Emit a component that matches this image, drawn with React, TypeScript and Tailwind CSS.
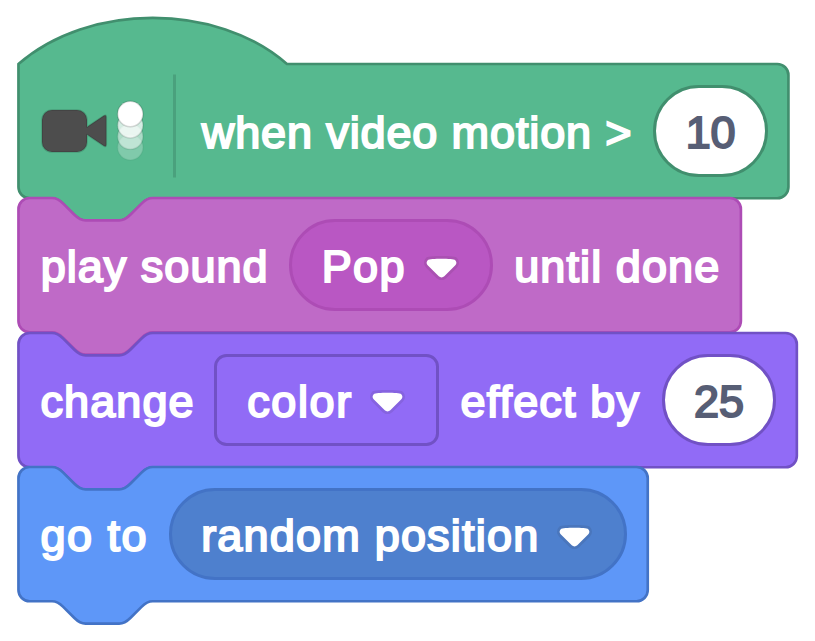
import type { ReactNode } from "react";

const UNIT = 2.797;

type Theme = { fill: string; stroke: string };

const NOTCH = "c2,0 3,1 4,2 l4,4 c1,1 2,2 4,2 h12 c2,0 3,-1 4,-2 l4,-4 c1,-1 2,-2 4,-2";
const TAB = "c-2,0 -3,1 -4,2 l-4,4 c-1,1 -2,2 -4,2 h-12 c-2,0 -3,-1 -4,-2 l-4,-4 c-1,-1 -2,-2 -4,-2";

function Shape({ width, theme, hat }: { width: number; theme: Theme; hat?: boolean }) {
  const top = hat ? "M0,0 c25,-22 71,-22 96,0" : `M0,4 a4,4 0 0,1 4,-4 H12 ${NOTCH}`;
  const d = `${top} H${width - 4} a4,4 0 0,1 4,4 v40 a4,4 0 0,1 -4,4 H48 ${TAB} H4 a4,4 0 0,1 -4,-4 z`;
  return (
    <svg
      className="absolute left-0 top-0 overflow-visible"
      width={width * UNIT}
      height={48 * UNIT}
      viewBox={`0 0 ${width} 48`}
    >
      <path d={d} transform="translate(0.16 0)" fill={theme.fill} stroke={theme.stroke} strokeWidth={0.95} />
    </svg>
  );
}

function Block({ width, theme, hat, children }: { width: number; theme: Theme; hat?: boolean; children: ReactNode }) {
  return (
    <div className="relative h-[134.25px]">
      <Shape width={width} theme={theme} hat={hat} />
      <div className="relative flex h-full items-center pl-[0.5px]">{children}</div>
    </div>
  );
}

function Label({ className, children }: { className: string; children: ReactNode }) {
  return <span className={`shrink-0 whitespace-pre ${className}`}>{children}</span>;
}

function NumberInput({ className, children }: { className: string; children: ReactNode }) {
  return (
    <div
      className={`flex h-[92px] w-[114.2px] shrink-0 items-center justify-center rounded-full border-[3px] bg-white text-[#575e75] ${className}`}
    >
      <span className="tracking-[-0.1px]">{children}</span>
    </div>
  );
}

function Caret({ className }: { className: string }) {
  return (
    <svg className={`shrink-0 ${className}`} width="35" height="24.2" viewBox="0 0 12.71 8.79">
      <path
        fill="#231f20"
        opacity="0.1"
        d="M12.71,2.44A2.41,2.41,0,0,1,12,4.16L8.08,8.08a2.45,2.45,0,0,1-3.45,0L0.72,4.16A2.42,2.42,0,0,1,0,2.44,2.48,2.48,0,0,1,.71.71C1,0.47,1.43,0,6.36,0S11.75,0.46,12,.71A2.44,2.44,0,0,1,12.71,2.44Z"
      />
      <path
        fill="#fff"
        d="M6.36,7.79a1.43,1.43,0,0,1-1-.42L1.42,3.45a1.44,1.44,0,0,1,0-2c0.56-.56,9.31-0.56,9.87,0a1.44,1.44,0,0,1,0,2L7.37,7.37A1.43,1.43,0,0,1,6.36,7.79Z"
      />
    </svg>
  );
}

function VideoIcon() {
  return (
    <svg className="ml-[21.5px] shrink-0" width="110" height="66" viewBox="40 98 110 66">
      <g fill="#4d4d4d" stroke="#000" strokeOpacity="0.15" strokeWidth="1.6" strokeLinejoin="round">
        <path d="M52,110 H77 a10,10 0 0,1 10,10 V127 L104,115.6 Q106.3,114.3 106.3,117 V144.6 Q106.3,147.4 104,146 L87,134.6 V142 a10,10 0 0,1 -10,10 H52 a10,10 0 0,1 -10,-10 V120 a10,10 0 0,1 10,-10 z" />
      </g>
      <g fill="#fff" stroke="#000" strokeOpacity="0.15" strokeWidth="1.6">
        <circle cx="130.3" cy="147.3" r="12.7" opacity="0.25" />
        <circle cx="130.3" cy="136.6" r="12.7" opacity="0.5" />
        <circle cx="130.3" cy="125.3" r="12.7" opacity="0.75" />
        <circle cx="130.3" cy="114" r="12.7" />
      </g>
    </svg>
  );
}

const video: Theme = { fill: "#56b98f", stroke: "#418f6e" };
const sound: Theme = { fill: "#bf6ac7", stroke: "#ad4cb5" };
const looks: Theme = { fill: "#916bf6", stroke: "#7151c5" };
const motion: Theme = { fill: "#5e97f8", stroke: "#4373c6" };

export default function App() {
  return (
    <div className="h-[641px] w-[815px] overflow-hidden bg-white pl-[18px] pt-[64px] font-['Liberation_Sans',Arial,sans-serif] text-[45px] font-normal leading-[52px] text-white [-webkit-text-stroke-width:2px]">
      <Block width={275.3} theme={video} hat>
        <VideoIcon />
        <div className="ml-[23.2px] h-[103px] w-[3px] shrink-0 -translate-y-[5.5px] bg-[#4aa17d]" />
        <Label className="ml-[25.6px] w-[451.7px] pt-[3px] tracking-[0.88px]">when video motion &gt;</Label>
        <NumberInput className="border-[#418f6e] pt-[3px]">10</NumberInput>
      </Block>
      <Block width={258.3} theme={sound}>
        <Label className="ml-[22.3px] w-[248.2px] pt-[3px] tracking-[1px]">play sound</Label>
        <div className="flex h-[92px] w-[204px] shrink-0 items-center rounded-full border-[3px] border-[#ad4cb5] bg-[#b957c3]">
          <Label className="ml-[29.8px] w-[102.4px] pt-[3px] tracking-[1.3px]">Pop</Label>
          <Caret className="mt-[5px]" />
        </div>
        <Label className="ml-[21.2px] pt-[3px] tracking-[1.1px]">until done</Label>
      </Block>
      <Block width={278.3} theme={looks}>
        <Label className="ml-[22px] w-[173.7px] pt-[5px] tracking-[1.1px]">change</Label>
        <div className="flex h-[92px] w-[225.3px] shrink-0 items-center rounded-[12.6px] border-[3px] border-[#7151c5]">
          <Label className="ml-[30px] w-[123px] pt-[5px] tracking-[1.6px]">color</Label>
          <Caret className="mt-[5.5px]" />
        </div>
        <Label className="ml-[21px] w-[201.4px] pt-[5px] tracking-[1.15px]">effect by</Label>
        <NumberInput className="border-[#7151c5] pt-[4px]">25</NumberInput>
      </Block>
      <Block width={225} theme={motion}>
        <Label className="ml-[22px] w-[128.7px] pt-[5px] tracking-[1.5px]">go to</Label>
        <div className="flex h-[92px] w-[457.7px] shrink-0 items-center rounded-full border-[3px] border-[#4373c6] bg-[#4e80ce]">
          <Label className="ml-[29px] w-[356px] pt-[5px] tracking-[1.2px]">random position</Label>
          <Caret className="mt-[5.5px]" />
        </div>
      </Block>
    </div>
  );
}
